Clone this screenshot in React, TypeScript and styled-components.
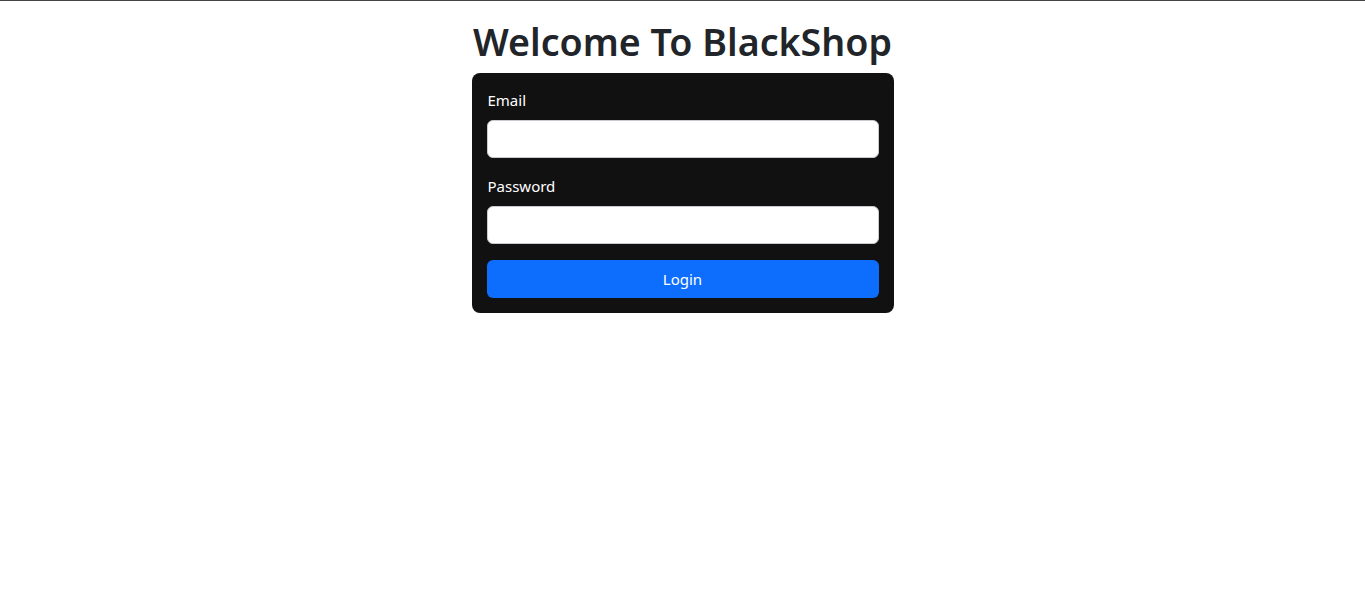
import { ReactElement } from "react";
import styled, { createGlobalStyle } from "styled-components";

export default function App(): ReactElement {
  return (
    <>
      <GlobalStyle />
      <StyledPage>
        <StyledTitle>Welcome To BlackShop</StyledTitle>
        <StyledCard>
          <StyledField>
            <StyledLabel htmlFor="email">Email</StyledLabel>
            <StyledInput id="email" type="email" />
          </StyledField>
          <StyledField>
            <StyledLabel htmlFor="password">Password</StyledLabel>
            <StyledInput id="password" type="password" />
          </StyledField>
          <StyledButton type="button">Login</StyledButton>
        </StyledCard>
      </StyledPage>
    </>
  );
}

const GlobalStyle = createGlobalStyle`
  html, body {
    margin: 0;
    padding: 0;
    background: #fff;
  }

  body {
    border-top: 1px solid #454545;
    color: #212529;
    font-family: "Noto Sans", "Open Sans", sans-serif;
  }

  * {
    box-sizing: border-box;
  }
`;

const StyledPage = styled.div`
  align-items: center;
  display: flex;
  flex-direction: column;
  padding-top: 17px;
`;

const StyledTitle = styled.h1`
  color: #212529;
  font-size: 37.6px;
  font-weight: 600;
  line-height: 48px;
  margin: 0 0 7px;
  padding: 0;
`;

const StyledCard = styled.form`
  background-color: #111111;
  border-radius: 8px;
  display: flex;
  flex-direction: column;
  gap: 16px;
  padding: 15px;
  width: 422px;
`;

const StyledField = styled.div`
  display: flex;
  flex-direction: column;
  gap: 8px;
`;

const StyledLabel = styled.label`
  color: #ffffff;
  font-size: 15px;
  line-height: 24px;
  padding-left: 1px;
`;

const StyledInput = styled.input`
  background: #ffffff;
  border: 1px solid #c8ccd0;
  border-radius: 6px;
  font-family: inherit;
  font-size: 16px;
  height: 38px;
  outline: none;
  padding: 6px 12px;
  width: 100%;
`;

const StyledButton = styled.button`
  background-color: #0d6efd;
  border: none;
  border-radius: 6px;
  color: #ffffff;
  font-family: inherit;
  font-size: 15px;
  height: 38px;
  width: 100%;

  :hover {
    cursor: pointer;
  }
`;
